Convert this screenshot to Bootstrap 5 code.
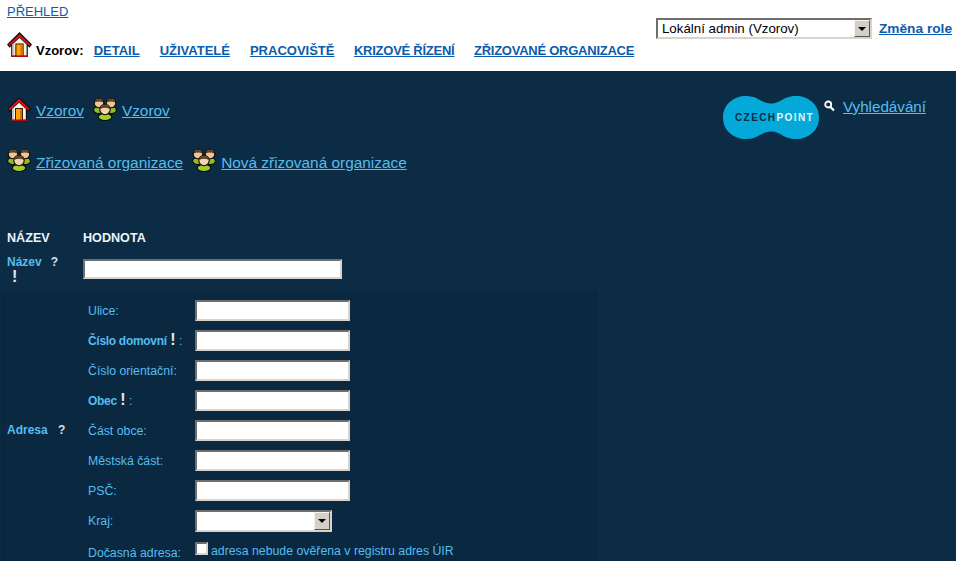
<!DOCTYPE html>
<html lang="cs">
<head>
  <meta charset="UTF-8">
  <title>Přehled</title>
  <meta name="viewport" content="width=device-width, initial-scale=1">
  <link href="https://cdn.jsdelivr.net/npm/bootstrap@5.3.3/dist/css/bootstrap.min.css" rel="stylesheet">
  <style>
    html, body { height: 100%; }
    body {
      background: #0b2c44;
      font-family: "Liberation Sans", Arial, sans-serif;
      font-size: 12px;
      color: #55bdf0;
      overflow: hidden;
    }
    .top-head { background: #fff; height: 71px; padding: 4px 4px 0 7px; white-space: nowrap; }
    .top-head a { color: #0b5cad; font-weight: 700; font-size: 13px; }
    .top-home { color: #000; font-weight: 700; font-size: 13px; margin-left: 4px; }
    .top-links { margin-top: 12px; align-items: flex-start; height: 25px; }
    .top-links a, .top-home { padding-top: 11px; line-height: 16px; }
    .top-links a { margin-left: 20px; }
    .top-links a:first-of-type { margin-left: 10px; }
    .top-links a.tight-link { letter-spacing: -.25px; margin-left: 19.500px; }
    .overview-link { line-height: 16px; display: block; font-weight: 400 !important; }
    .role-box { padding-top: 14px; }
    .role-box a { margin-left: 7px; line-height: 22px; font-size: 13.7px; }
    .bevel {
      border-width: 2px;
      border-style: solid;
      border-color: #6e6e6e #d8d4cc #d8d4cc #6e6e6e;
      background: #fff;
      border-radius: 0;
      outline: 0;
      padding: 0 3px;
      color: #000;
      font: 13.3px "Liberation Sans", Arial, sans-serif;
      display: block;
    }
    .pick-wrap { position: relative; display: block; }
    .pick-wrap select { appearance: none; width: 100%; height: 100%; }
    .pick-btn {
      position: absolute; right: 2px; top: 2px; bottom: 2px; width: 16px;
      background: #d4d0c8;
      border: 1px solid; border-color: #f4f2ee #555 #555 #f4f2ee;
      display: flex; align-items: center; justify-content: center;
    }
    .pick-btn::after {
      content: ""; border-style: solid; border-width: 4px 4px 0 4px;
      border-color: #000 transparent transparent transparent;
    }
    .role-pick { width: 216px; height: 21px; }
    .role-pick select { padding-left: 4px; }
    .main-links { padding: 26px 30px 0 7px; height: 158px; }
    .main-links a { color: #55bdf0; font-size: 15.4px; }
    .link-line { height: 24px; gap: 5px; align-items: flex-start; }
    .link-line a { padding-top: 4px; line-height: 20px; }
    .link-line + .link-line { margin-top: 27px; }
    .link-line + .link-line a { padding-top: 5px; }
    .link-line a + svg { margin-left: 4px; }
    .search-box a { margin-left: 8px; line-height: 20px; font-size: 15.2px; }
    .search-box .mag { margin: 3px 0 0 5px; }
    .cz-logo { margin-top: -1px; }
    .head-row { padding-left: 7px; font-weight: 700; font-size: 12.6px; color: #eef4f8; height: 18px; align-items: center; }
    .name-col { width: 76px; flex: none; }
    .field-name { color: #55bdf0; font-weight: 700; padding-left: 7px; height: 43px; }
    .help-mark { color: #d8e0e6; font-weight: 700; }
    .must { color: #e4e8ea; font-weight: 700; font-size: 16px; line-height: 12px; }
    .name-input { width: 259px; height: 20px; margin-top: 12px; }
    .name-top { height: 18px; margin-top: 6px; }
    .name-top .help-mark { margin-left: 9px; }
    .name-must { padding-left: 5px; height: 14px; }
    .addr-panel { background: #0a2840; width: 597px; margin-left: 1px; display: flex; padding: 10px 0 8px; min-height: 280px; }
    .addr-title { width: 87px; flex: none; padding-left: 6px; font-weight: 700; align-self: center; margin-top: -13px; }
    .addr-title .help-mark { margin-left: 7px; }
    .addr-row { height: 30px; display: flex; font-size: 12.3px; }
    .addr-label { width: 107px; flex: none; padding-top: 3px; line-height: 16px; }
    .addr-label b { font-weight: 700; font-size: 12px; letter-spacing: -.3px; }
    .addr-input { width: 155px; height: 21px; }
    .kraj-pick { width: 137px; height: 22px; }
    .kraj-row { height: 32px; }
    .no-check { width: 13px; height: 13px; margin: 0 3px 0 0; border-radius: 0; appearance: none; }
    .check-row { display: flex; align-items: flex-start; }
  </style>
</head>
<body>

  <svg width="0" height="0" class="d-block" aria-hidden="true">
    <symbol id="ico-home" viewBox="0 0 24 24">
      <path d="M12 0 L0 12 L2.500 15 L4 13.500 L4 24 L20 24 L20 13.500 L21.500 15 L24 12 Z" fill="#111"/>
      <path d="M12 1.800 L1.500 12 L2.700 13.400 L12 5 L21.300 13.400 L22.500 12 Z" fill="#e40c0c"/>
      <path d="M12 5.800 L5.200 12 L5.200 22.800 L18.800 22.800 L18.800 12 Z" fill="#f8f6f2"/>
      <path d="M5.200 12 L7 10.400 L7 22.800 L5.200 22.800Z" fill="#c9c4bc"/>
      <rect x="8" y="11" width="8" height="12" fill="#3a1c00"/>
      <rect x="9" y="12" width="6" height="11" fill="#ffa400"/>
      <rect x="13" y="12" width="2" height="11" fill="#e86a00"/>
      <rect x="4" y="22.500" width="16" height="1.500" fill="#a80c0c"/>
    </symbol>
    <symbol id="ico-people" viewBox="0 0 24 24">
      <g stroke="#0c0c08" stroke-width="1.100">
        <ellipse cx="5.800" cy="13" rx="5.200" ry="3.600" fill="#8fbb2c"/>
        <ellipse cx="18.200" cy="13" rx="5.200" ry="3.600" fill="#8fbb2c"/>
        <circle cx="6" cy="6" r="4.800" fill="#eec49a"/>
        <circle cx="18" cy="6" r="4.800" fill="#eec49a"/>
        <ellipse cx="12" cy="20" rx="6.800" ry="3.600" fill="#a0cc30"/>
        <circle cx="12" cy="12.500" r="5.200" fill="#f6d2ac"/>
      </g>
      <path d="M1.600 5.500 A4.500 4.500 0 0 1 10.400 5.500 Q6 3.400 1.600 5.500Z" fill="#5c3e20"/>
      <path d="M13.600 5.500 A4.500 4.500 0 0 1 22.400 5.500 Q18 3.400 13.600 5.500Z" fill="#5c3e20"/>
      <path d="M7.200 12 A4.900 4.900 0 0 1 16.800 12 Q12 9.600 7.200 12Z" fill="#5c3e20"/>
    </symbol>
  </svg>

  <div class="top-head d-flex justify-content-between">
    <div>
      <a class="overview-link" href="#">PŘEHLED</a>
      <div class="top-links d-flex">
        <svg width="25" height="25"><use href="#ico-home"/></svg>
        <span class="top-home">Vzorov:</span>
        <a href="#">DETAIL</a>
        <a href="#">UŽIVATELÉ</a>
        <a href="#">PRACOVIŠTĚ</a>
        <a class="tight-link" href="#">KRIZOVÉ ŘÍZENÍ</a>
        <a class="tight-link" href="#">ZŘIZOVANÉ ORGANIZACE</a>
      </div>
    </div>
    <div class="role-box d-flex align-items-start">
      <span class="pick-wrap role-pick">
        <select class="bevel"><option>Lokální admin (Vzorov)</option></select>
        <span class="pick-btn"></span>
      </span>
      <a href="#">Změna role</a>
    </div>
  </div>

  <div class="main-links d-flex justify-content-between">
    <div>
      <div class="link-line d-flex">
        <svg width="24" height="24"><use href="#ico-home"/></svg>
        <a href="#">Vzorov</a>
        <svg width="24" height="24"><use href="#ico-people"/></svg>
        <a href="#">Vzorov</a>
      </div>
      <div class="link-line d-flex">
        <svg width="24" height="24"><use href="#ico-people"/></svg>
        <a href="#">Zřizovaná organizace</a>
        <svg width="24" height="24"><use href="#ico-people"/></svg>
        <a href="#">Nová zřizovaná organizace</a>
      </div>
    </div>
    <div class="search-box d-flex align-items-start">
      <svg class="cz-logo" width="96" height="43" viewBox="0 0 96 43">
        <path d="M0 21.500 C0 8 11 0 23 0 C36 0 38 7.500 48 7.500 C58 7.500 60 0 73 0 C85 0 96 8 96 21.500 C96 35 85 43 73 43 C60 43 58 35.500 48 35.500 C38 35.500 36 43 23 43 C11 43 0 35 0 21.500Z" fill="#04a9d9"/>
        <text x="12" y="25" font-family="Liberation Sans, sans-serif" font-size="10" font-weight="700" letter-spacing="1.4" fill="#0b2c44">CZECH<tspan fill="#e4f6fb">POINT</tspan></text>
      </svg>
      <svg class="mag" width="11" height="12" viewBox="0 0 11 12">
        <circle cx="4.200" cy="4.500" r="3" fill="none" stroke="#fff" stroke-width="1.800"/>
        <path d="M6.500 7 L10 10.500" stroke="#fff" stroke-width="2.200"/>
      </svg>
      <a href="#">Vyhledávání</a>
    </div>
  </div>

  <div class="head-row d-flex">
    <div class="name-col">NÁZEV</div>
    <div>HODNOTA</div>
  </div>
  <div class="field-name d-flex">
    <div class="name-col">
      <div class="name-top d-flex"><span>Název</span><span class="help-mark">?</span></div>
      <div class="name-must must">!</div>
    </div>
    <input class="bevel name-input" type="text">
  </div>

  <div class="addr-panel">
    <div class="addr-title">Adresa <span class="help-mark">?</span></div>
    <div>
      <div class="addr-row"><div class="addr-label">Ulice:</div><input class="bevel addr-input" type="text"></div>
      <div class="addr-row"><div class="addr-label"><b>Číslo domovní</b> <span class="must">!</span> :</div><input class="bevel addr-input" type="text"></div>
      <div class="addr-row"><div class="addr-label">Číslo orientační:</div><input class="bevel addr-input" type="text"></div>
      <div class="addr-row"><div class="addr-label"><b>Obec</b> <span class="must">!</span> :</div><input class="bevel addr-input" type="text"></div>
      <div class="addr-row"><div class="addr-label">Část obce:</div><input class="bevel addr-input" type="text"></div>
      <div class="addr-row"><div class="addr-label">Městská část:</div><input class="bevel addr-input" type="text"></div>
      <div class="addr-row"><div class="addr-label">PSČ:</div><input class="bevel addr-input" type="text"></div>
      <div class="addr-row kraj-row">
        <div class="addr-label">Kraj:</div>
        <span class="pick-wrap kraj-pick">
          <select class="bevel"><option></option></select>
          <span class="pick-btn"></span>
        </span>
      </div>
      <div class="addr-row">
        <div class="addr-label">Dočasná adresa:</div>
        <div class="check-row"><input class="bevel no-check" type="checkbox"><span>adresa nebude ověřena v registru adres ÚIR</span></div>
      </div>
    </div>
  </div>

  <script src="https://cdn.jsdelivr.net/npm/bootstrap@5.3.3/dist/js/bootstrap.bundle.min.js"></script>
</body>
</html>
